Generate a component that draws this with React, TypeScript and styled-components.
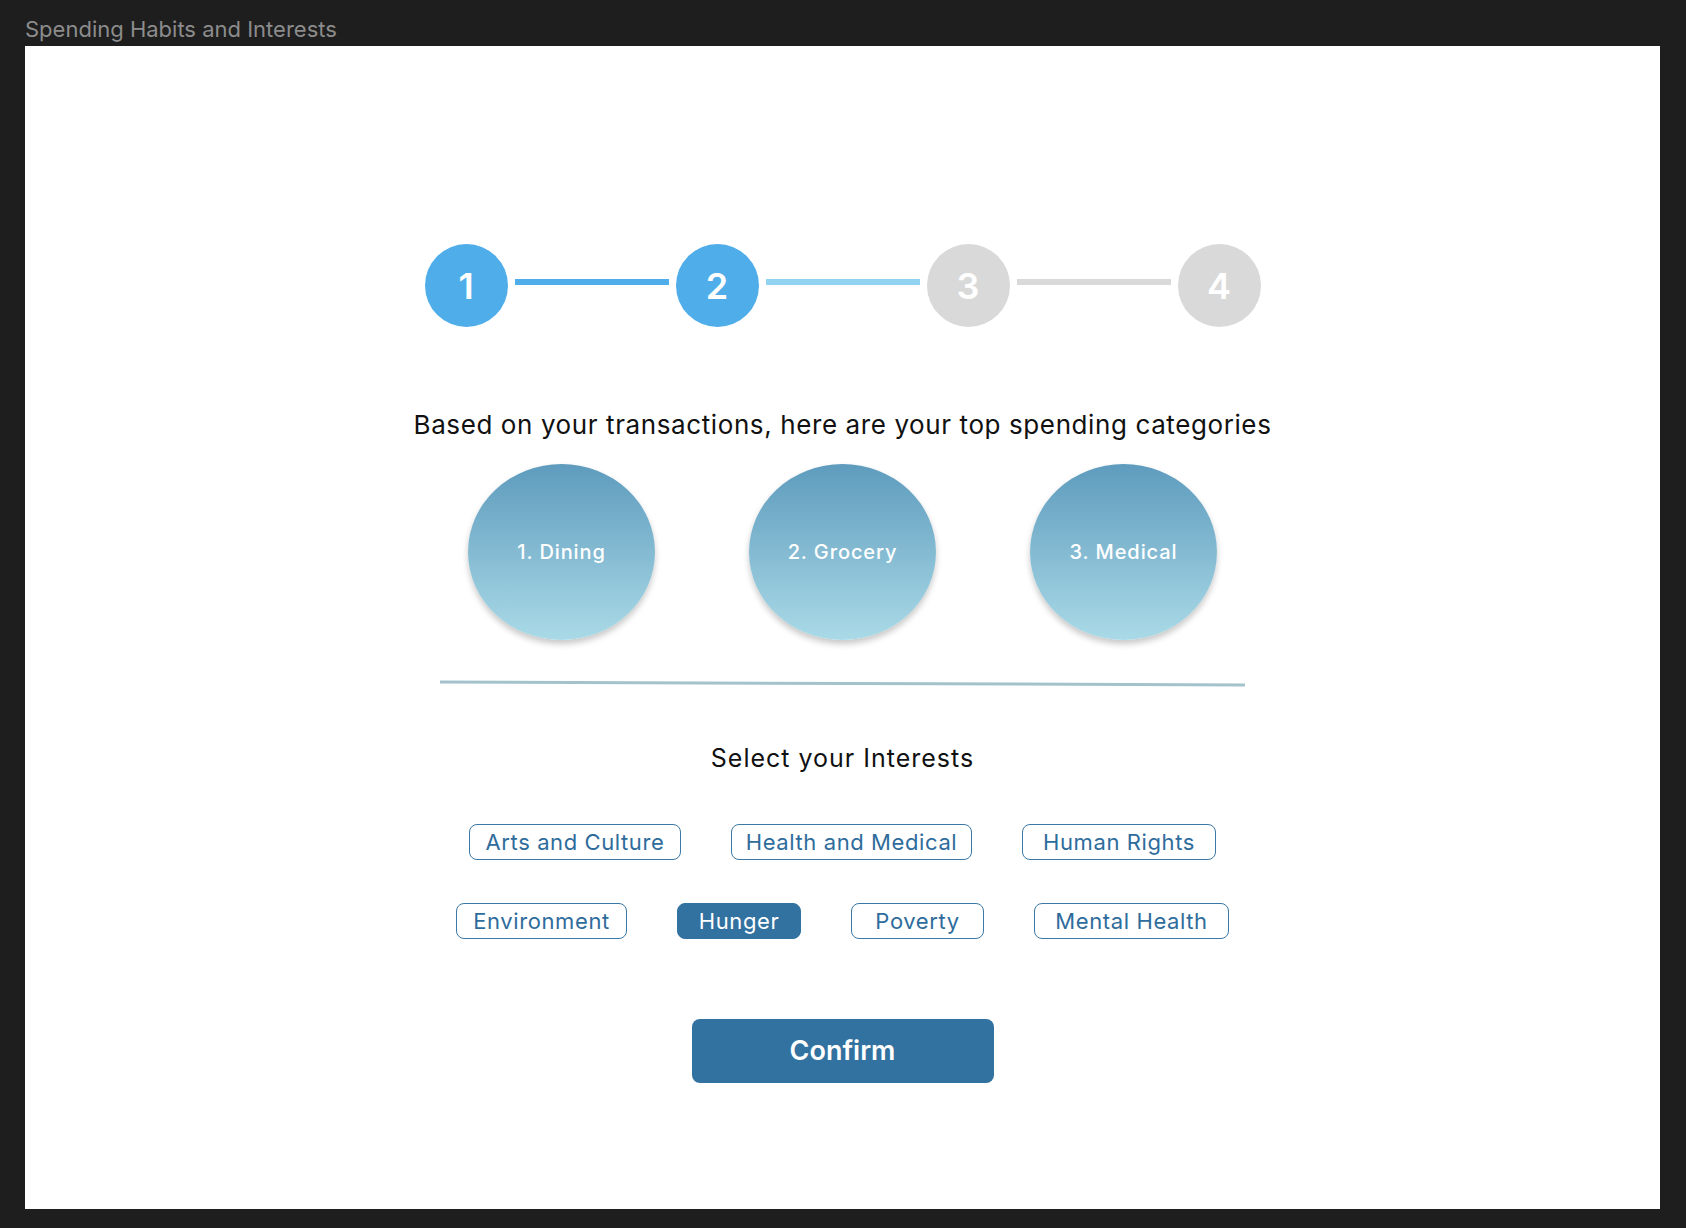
import React from "react";
import styled, { createGlobalStyle } from "styled-components";

const GlobalStyle = createGlobalStyle`
  html, body {
    margin: 0;
    padding: 0;
    background: #1e1e1e;
    font-family: Inter, "Noto Sans", Roboto, sans-serif;
  }
`;

const Page = styled.div`
  width: 1686px;
  height: 1228px;
  box-sizing: border-box;
  padding: 0 26px 19px 25px;
  display: flex;
  flex-direction: column;
`;

const TitleBar = styled.div`
  height: 46px;
  display: flex;
  align-items: flex-end;
  padding-bottom: 4px;
  box-sizing: border-box;
  font-size: 22px;
  color: #8c8c8c;
`;

const Frame = styled.main`
  flex: 1;
  background: #ffffff;
  display: flex;
  flex-direction: column;
  align-items: center;
  padding-top: 198px;
  box-sizing: border-box;
`;

const Stepper = styled.div`
  display: flex;
  align-items: flex-start;
  gap: 7px;
`;

const StepCircle = styled.div<{ $active: boolean }>`
  width: 83px;
  height: 83px;
  border-radius: 50%;
  background: ${(p) => (p.$active ? "#4fade9" : "#d9d9d9")};
  color: #ffffff;
  font-size: 36px;
  font-weight: 600;
  display: flex;
  align-items: center;
  justify-content: center;
`;

const StepLine = styled.div<{ $color: string }>`
  width: 154px;
  height: 6px;
  margin-top: 35px;
  background: ${(p) => p.$color};
`;

const Heading = styled.h2`
  margin: 82px 0 0;
  font-size: 26px;
  font-weight: 400;
  line-height: 31px;
  letter-spacing: 0.6px;
  color: #111111;
`;

const Categories = styled.div`
  display: flex;
  gap: 94px;
  margin-top: 24px;
`;

const Category = styled.div`
  width: 187px;
  height: 176px;
  border-radius: 50%;
  background: linear-gradient(180deg, #5e9bbd 0%, #aadae7 100%);
  box-shadow: 0 4px 6px rgba(0, 0, 0, 0.22);
  display: flex;
  align-items: center;
  justify-content: center;
  color: #ffffff;
  font-size: 20px;
  font-weight: 500;
  letter-spacing: 0.9px;
`;

const Divider = styled.div`
  width: 805px;
  height: 2.5px;
  margin-top: 42px;
  background: #a3c2ca;
  transform: rotate(0.2deg);
`;

const SubHeading = styled.h3`
  margin: 58px 0 0;
  font-size: 25px;
  font-weight: 400;
  line-height: 30px;
  letter-spacing: 1px;
  color: #111111;
`;

const TagRows = styled.div`
  display: flex;
  flex-direction: column;
  align-items: center;
  gap: 43px;
  margin-top: 51px;
`;

const TagRow = styled.div`
  display: flex;
  gap: 50px;
`;

const Tag = styled.button<{ $selected?: boolean; $width: number }>`
  width: ${(p) => p.$width}px;
  height: 36px;
  box-sizing: border-box;
  padding: 0;
  border-radius: 8px;
  border: 1.5px solid ${(p) => (p.$selected ? "#3272a0" : "#3b78a6")};
  background: ${(p) => (p.$selected ? "#3272a0" : "#ffffff")};
  color: ${(p) => (p.$selected ? "#ffffff" : "#2e6c9c")};
  font-family: Inter, "Noto Sans", sans-serif;
  font-size: 22px;
  font-weight: 400;
  letter-spacing: 0.6px;
  display: flex;
  align-items: center;
  justify-content: center;
  cursor: pointer;
`;

const ConfirmButton = styled.button`
  margin-top: 80px;
  width: 302px;
  height: 64px;
  border: none;
  border-radius: 8px;
  background: #3272a0;
  color: #ffffff;
  font-family: Inter, "Noto Sans", sans-serif;
  font-size: 27px;
  font-weight: 600;
  cursor: pointer;
`;

const steps = [
  { n: 1, active: true },
  { n: 2, active: true },
  { n: 3, active: false },
  { n: 4, active: false },
];
const lineColors = ["#4fade9", "#93d3f2", "#d9d9d9"];

const categories = ["1. Dining", "2. Grocery", "3. Medical"];

const rows: { label: string; width: number; selected?: boolean }[][] = [
  [
    { label: "Arts and Culture", width: 212 },
    { label: "Health and Medical", width: 241 },
    { label: "Human Rights", width: 194 },
  ],
  [
    { label: "Environment", width: 171 },
    { label: "Hunger", width: 124, selected: true },
    { label: "Poverty", width: 133 },
    { label: "Mental Health", width: 195 },
  ],
];

export default function App() {
  return (
    <>
      <GlobalStyle />
      <Page>
        <TitleBar>Spending Habits and Interests</TitleBar>
        <Frame>
          <Stepper>
            {steps.map((s, i) => (
              <React.Fragment key={s.n}>
                <StepCircle $active={s.active}>{s.n}</StepCircle>
                {i < steps.length - 1 && <StepLine $color={lineColors[i]} />}
              </React.Fragment>
            ))}
          </Stepper>
          <Heading>Based on your transactions, here are your top spending categories</Heading>
          <Categories>
            {categories.map((c) => (
              <Category key={c}>{c}</Category>
            ))}
          </Categories>
          <Divider />
          <SubHeading>Select your Interests</SubHeading>
          <TagRows>
            {rows.map((row, ri) => (
              <TagRow key={ri}>
                {row.map((t) => (
                  <Tag key={t.label} $selected={t.selected} $width={t.width}>
                    {t.label}
                  </Tag>
                ))}
              </TagRow>
            ))}
          </TagRows>
          <ConfirmButton>Confirm</ConfirmButton>
        </Frame>
      </Page>
    </>
  );
}
